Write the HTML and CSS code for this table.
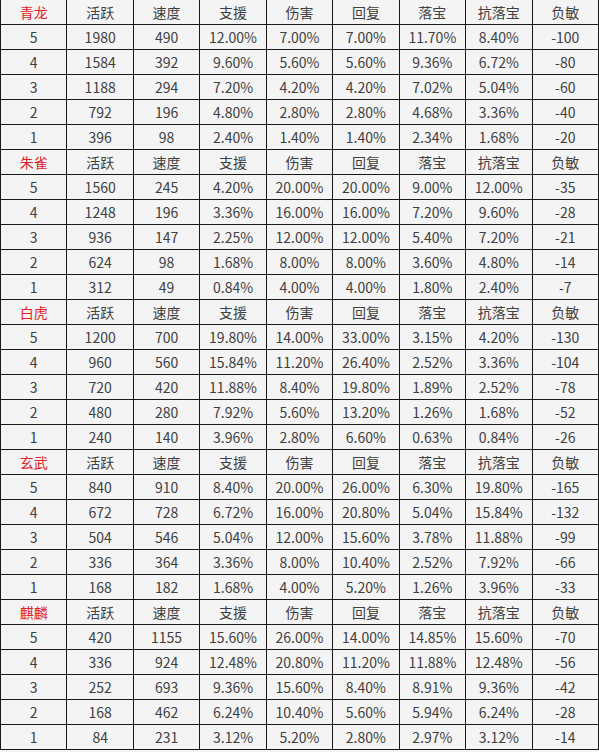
FILE: index.html
```html
<!DOCTYPE html>
<html lang="zh">
<head>
<meta charset="utf-8">
<title>四象属性表</title>
<link rel="stylesheet" href="styles.css">
</head>
<body>
<table class="stats">
<colgroup><col><col><col><col><col><col><col><col><col></colgroup>
<tbody>
<tr class="head first"><td class="name">青龙</td><td>活跃</td><td>速度</td><td>支援</td><td>伤害</td><td>回复</td><td>落宝</td><td>抗落宝</td><td>负敏</td></tr>
<tr><td>5</td><td>1980</td><td>490</td><td>12.00%</td><td>7.00%</td><td>7.00%</td><td>11.70%</td><td>8.40%</td><td>-100</td></tr>
<tr><td>4</td><td>1584</td><td>392</td><td>9.60%</td><td>5.60%</td><td>5.60%</td><td>9.36%</td><td>6.72%</td><td>-80</td></tr>
<tr><td>3</td><td>1188</td><td>294</td><td>7.20%</td><td>4.20%</td><td>4.20%</td><td>7.02%</td><td>5.04%</td><td>-60</td></tr>
<tr><td>2</td><td>792</td><td>196</td><td>4.80%</td><td>2.80%</td><td>2.80%</td><td>4.68%</td><td>3.36%</td><td>-40</td></tr>
<tr><td>1</td><td>396</td><td>98</td><td>2.40%</td><td>1.40%</td><td>1.40%</td><td>2.34%</td><td>1.68%</td><td>-20</td></tr>
<tr class="head"><td class="name">朱雀</td><td>活跃</td><td>速度</td><td>支援</td><td>伤害</td><td>回复</td><td>落宝</td><td>抗落宝</td><td>负敏</td></tr>
<tr><td>5</td><td>1560</td><td>245</td><td>4.20%</td><td>20.00%</td><td>20.00%</td><td>9.00%</td><td>12.00%</td><td>-35</td></tr>
<tr><td>4</td><td>1248</td><td>196</td><td>3.36%</td><td>16.00%</td><td>16.00%</td><td>7.20%</td><td>9.60%</td><td>-28</td></tr>
<tr><td>3</td><td>936</td><td>147</td><td>2.25%</td><td>12.00%</td><td>12.00%</td><td>5.40%</td><td>7.20%</td><td>-21</td></tr>
<tr><td>2</td><td>624</td><td>98</td><td>1.68%</td><td>8.00%</td><td>8.00%</td><td>3.60%</td><td>4.80%</td><td>-14</td></tr>
<tr><td>1</td><td>312</td><td>49</td><td>0.84%</td><td>4.00%</td><td>4.00%</td><td>1.80%</td><td>2.40%</td><td>-7</td></tr>
<tr class="head"><td class="name">白虎</td><td>活跃</td><td>速度</td><td>支援</td><td>伤害</td><td>回复</td><td>落宝</td><td>抗落宝</td><td>负敏</td></tr>
<tr><td>5</td><td>1200</td><td>700</td><td>19.80%</td><td>14.00%</td><td>33.00%</td><td>3.15%</td><td>4.20%</td><td>-130</td></tr>
<tr><td>4</td><td>960</td><td>560</td><td>15.84%</td><td>11.20%</td><td>26.40%</td><td>2.52%</td><td>3.36%</td><td>-104</td></tr>
<tr><td>3</td><td>720</td><td>420</td><td>11.88%</td><td>8.40%</td><td>19.80%</td><td>1.89%</td><td>2.52%</td><td>-78</td></tr>
<tr><td>2</td><td>480</td><td>280</td><td>7.92%</td><td>5.60%</td><td>13.20%</td><td>1.26%</td><td>1.68%</td><td>-52</td></tr>
<tr><td>1</td><td>240</td><td>140</td><td>3.96%</td><td>2.80%</td><td>6.60%</td><td>0.63%</td><td>0.84%</td><td>-26</td></tr>
<tr class="head"><td class="name">玄武</td><td>活跃</td><td>速度</td><td>支援</td><td>伤害</td><td>回复</td><td>落宝</td><td>抗落宝</td><td>负敏</td></tr>
<tr><td>5</td><td>840</td><td>910</td><td>8.40%</td><td>20.00%</td><td>26.00%</td><td>6.30%</td><td>19.80%</td><td>-165</td></tr>
<tr><td>4</td><td>672</td><td>728</td><td>6.72%</td><td>16.00%</td><td>20.80%</td><td>5.04%</td><td>15.84%</td><td>-132</td></tr>
<tr><td>3</td><td>504</td><td>546</td><td>5.04%</td><td>12.00%</td><td>15.60%</td><td>3.78%</td><td>11.88%</td><td>-99</td></tr>
<tr><td>2</td><td>336</td><td>364</td><td>3.36%</td><td>8.00%</td><td>10.40%</td><td>2.52%</td><td>7.92%</td><td>-66</td></tr>
<tr><td>1</td><td>168</td><td>182</td><td>1.68%</td><td>4.00%</td><td>5.20%</td><td>1.26%</td><td>3.96%</td><td>-33</td></tr>
<tr class="head"><td class="name">麒麟</td><td>活跃</td><td>速度</td><td>支援</td><td>伤害</td><td>回复</td><td>落宝</td><td>抗落宝</td><td>负敏</td></tr>
<tr><td>5</td><td>420</td><td>1155</td><td>15.60%</td><td>26.00%</td><td>14.00%</td><td>14.85%</td><td>15.60%</td><td>-70</td></tr>
<tr><td>4</td><td>336</td><td>924</td><td>12.48%</td><td>20.80%</td><td>11.20%</td><td>11.88%</td><td>12.48%</td><td>-56</td></tr>
<tr><td>3</td><td>252</td><td>693</td><td>9.36%</td><td>15.60%</td><td>8.40%</td><td>8.91%</td><td>9.36%</td><td>-42</td></tr>
<tr><td>2</td><td>168</td><td>462</td><td>6.24%</td><td>10.40%</td><td>5.60%</td><td>5.94%</td><td>6.24%</td><td>-28</td></tr>
<tr><td>1</td><td>84</td><td>231</td><td>3.12%</td><td>5.20%</td><td>2.80%</td><td>2.97%</td><td>3.12%</td><td>-14</td></tr>
</tbody>
</table>
</body>
</html>
```
FILE: styles.css
```css
html, body {
  margin: 0;
  padding: 0;
  background: #f4f4f4;
}
.stats {
  width: 599px;
  table-layout: fixed;
  border-collapse: collapse;
  background: #f4f4f4;
  font-family: "Noto Sans CJK SC", "Noto Sans", sans-serif;
  font-size: 14px;
  color: #404040;
}
.stats td {
  height: 24px;
  padding: 0;
  border: 1px solid #1a1a1a;
  text-align: center;
  vertical-align: middle;
  line-height: 24px;
  white-space: nowrap;
}
.stats tr.first td {
  border-top: none;
}
.stats td.name {
  color: #e0202a;
}
```
